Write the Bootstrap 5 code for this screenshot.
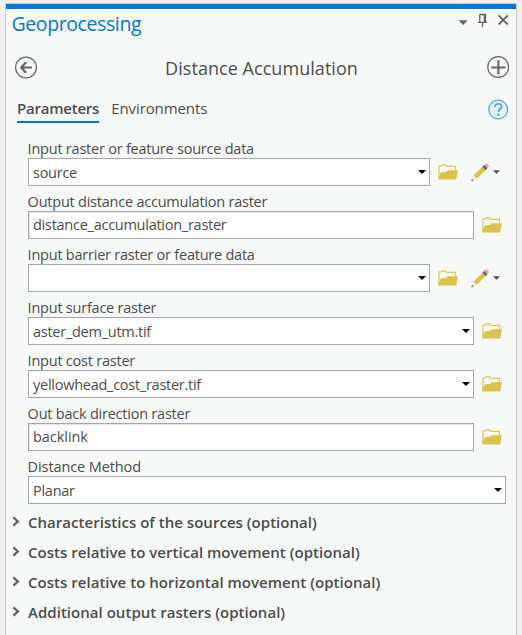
<!DOCTYPE html>
<html lang="en">
<head>
<meta charset="utf-8">
<meta name="viewport" content="width=device-width, initial-scale=1">
<title>Geoprocessing</title>
<link href="https://cdn.jsdelivr.net/npm/bootstrap@5.3.0/dist/css/bootstrap.min.css" rel="stylesheet">
<style>
  body { background: #f0f0f0; color: #4c4c4c; font: 14.5px "Open Sans", "Noto Sans", sans-serif; padding: 3px 5px 0; }
  svg { display: block; flex: none; }
  .pane { height: 632px; background: #f7f9f8; border: 1px solid #cacaca; border-bottom: 0; }
  .pane-accent { height: 5px; background: #0079d3; }
  .pane-title { height: 32px; padding: 0 6px 0 5.5px; }
  .pane-title h1 { font-size: 19.5px; line-height: 28px; letter-spacing: -.4px; color: #0079d3; padding-top: 1px; }
  .title-icons { padding-top: 4px; }
  .tool-head { height: 52px; padding: 0 6px 0 9px; }
  .tool-head h2 { font-size: 18px; line-height: 24px; letter-spacing: .05px; padding: 1px 2px 0 0; }
  .tabs { height: 47px; padding: 5px 7px 0 11px; }
  .tab-item { font-size: 15px; line-height: 20px; height: 25px; color: #4c4c4c; text-decoration: none; letter-spacing: -.1px; }
  .tab-item.active { font-weight: 600; letter-spacing: -.22px; border-bottom: 2px solid #0079c1; }
  .fields { padding: 0 10px 0 22px; }
  .field { height: 53px; }
  .field label { display: block; height: 18px; line-height: 17px; letter-spacing: -.23px; margin-left: -.4px; }
  .box { height: 28px; border: 1px solid #a6a6a6; background: #fff; padding: 0 3px 0 4px; line-height: 26px; letter-spacing: -.26px; }
  .box span { padding-top: 1px; line-height: 27px; }
  .box-text { box-shadow: inset 1px 1px 1px #e4e4e4; }
  .w-two { width: 402px; }
  .w-one { width: 446px; }
  .ls-wide { letter-spacing: -.1px !important; }
  .ls-none { letter-spacing: -.05px !important; }
  .folder-icon { margin-bottom: 1px; }
  .sections { padding: 0 6px; margin-top: -4px; }
  .section-row { height: 30px; font-size: 15px; font-weight: 600; letter-spacing: .03px; line-height: 30px; }
  .section-row svg { margin-right: 7px; margin-bottom: 2px; }
</style>
</head>
<body>
<svg width="0" height="0" class="position-absolute" aria-hidden="true">
  <symbol id="folder" viewBox="0 0 20 16">
    <path d="M1 14.5V2.2h1.8L4 .9h3.4l1.1 1.4h9v4.2" fill="#fcfaee" stroke="#dcc650" stroke-width="1.2"/>
    <path d="M.4 15.5V13L3 8.3l5-.2 1.5-1.9H20L18.2 15.5Z" fill="#d9c34a"/>
  </symbol>
  <symbol id="pencil" viewBox="0 0 19 19">
    <path d="M3.3 12.5 11.9 3.9 15.2 7.2 6.6 15.8Z" fill="#dcc348"/>
    <path d="M3.3 12.7 6.4 15.8 1.8 17.4Z" fill="#f4dfc4"/>
    <path d="M1 18.3 1.7 15.9 3.3 17.4Z" fill="#555"/>
    <path d="M11.9 3.9 14 1.8 17.3 5.1 15.2 7.2Z" fill="#666"/>
    <path d="M14 1.8 15 .9Q16 .1 17.2 1L18.2 2.1Q19 3.1 18.1 4.2L17.3 5.1Z" fill="#e9a49b"/>
  </symbol>
  <symbol id="down" viewBox="0 0 8 4"><path d="M0 0H8L4 4Z" fill="currentColor"/></symbol>
  <symbol id="chev" viewBox="0 0 9 11"><path d="M1.4 1.3 5.9 5.4 1.4 9.6" fill="none" stroke="#646464" stroke-width="2.3"/></symbol>
</svg>

<main class="pane">
  <div class="pane-accent"></div>
  <header class="pane-title d-flex justify-content-between align-items-start">
    <h1 class="fw-normal m-0">Geoprocessing</h1>
    <div class="title-icons d-flex">
      <svg width="52" height="16" viewBox="0 0 52 16" fill="none" stroke="#646464">
        <path d="M.5 7.2H9.7L5.1 12Z" fill="#646464" stroke="none"/>
        <path d="M22 1.5H27.5V9M21.8 1V9M20 9.3H29M24.5 9V14" stroke-width="1.3"/><path d="M26.6 1V9" stroke-width="1.8"/>
        <path d="M40.6 2.3 49.8 11.5M49.8 2.3 40.6 11.5" stroke-width="1.8"/>
      </svg>
    </div>
  </header>

  <div class="tool-head d-flex justify-content-between align-items-center">
    <svg width="23" height="23" viewBox="0 0 23 23" fill="none" stroke="#646464"><circle cx="11" cy="11.5" r="10.4" stroke-width="1.2"/><path d="M6 11.5H17M11 6.3 6.2 11.5 11 16.7" stroke-width="2.2"/></svg>
    <h2 class="fw-normal m-0">Distance Accumulation</h2>
    <svg width="23" height="23" viewBox="0 0 23 23" fill="none" stroke="#646464"><circle cx="11.2" cy="11" r="10.4" stroke-width="1.2"/><path d="M4.3 11.5H18.5M11.4 4.3V18.4" stroke-width="2.1"/></svg>
  </div>

  <nav class="tabs d-flex align-items-start">
    <a class="tab-item active" href="#">Parameters</a>
    <a class="tab-item ms-2 ps-1" href="#">Environments</a>
    <svg class="ms-auto" width="21" height="22" viewBox="0 0 21 22"><circle cx="10.2" cy="11.5" r="9.4" fill="#e5f2fb" stroke="#55a8df" stroke-width="1.3"/><path d="M7 9Q6.9 5.9 10.3 5.9T13.6 8.7C13.6 11 10.4 11.1 10.4 14" fill="none" stroke="#55a8df" stroke-width="1.9"/><path d="M9.2 15.7h2.3v2.3H9.2Z" fill="#55a8df"/></svg>
  </nav>

  <form class="fields">
    <div class="field">
      <label>Input raster or feature source data</label>
      <div class="d-flex align-items-center">
        <div class="box w-two d-flex align-items-center"><span>source</span><svg class="ms-auto text-black" width="8" height="4"><use href="#down"/></svg></div>
        <svg class="ms-2 folder-icon" width="20" height="16"><use href="#folder"/></svg>
        <svg class="ms-2 ps-1" width="23" height="19"><use href="#pencil" x=".3" width="19" height="19"/></svg>
        <svg class="ms-1" width="7" height="4"><use href="#down" width="7" height="4"/></svg>
      </div>
    </div>
    <div class="field">
      <label>Output distance accumulation raster</label>
      <div class="d-flex align-items-center">
        <div class="box box-text w-one">distance_accumulation_raster</div>
        <svg class="ms-2 folder-icon" width="20" height="16"><use href="#folder"/></svg>
      </div>
    </div>
    <div class="field">
      <label>Input barrier raster or feature data</label>
      <div class="d-flex align-items-center">
        <div class="box w-two d-flex align-items-center"><svg class="ms-auto text-black" width="8" height="4"><use href="#down"/></svg></div>
        <svg class="ms-2 folder-icon" width="20" height="16"><use href="#folder"/></svg>
        <svg class="ms-2 ps-1" width="23" height="19"><use href="#pencil" x=".3" width="19" height="19"/></svg>
        <svg class="ms-1" width="7" height="4"><use href="#down" width="7" height="4"/></svg>
      </div>
    </div>
    <div class="field">
      <label>Input surface raster</label>
      <div class="d-flex align-items-center">
        <div class="box w-one d-flex align-items-center"><span>aster_dem_utm.tif</span><svg class="ms-auto text-black" width="8" height="4"><use href="#down"/></svg></div>
        <svg class="ms-2 folder-icon" width="20" height="16"><use href="#folder"/></svg>
      </div>
    </div>
    <div class="field">
      <label>Input cost raster</label>
      <div class="d-flex align-items-center">
        <div class="box w-one d-flex align-items-center"><span>yellowhead_cost_raster.tif</span><svg class="ms-auto text-black" width="8" height="4"><use href="#down"/></svg></div>
        <svg class="ms-2 folder-icon" width="20" height="16"><use href="#folder"/></svg>
      </div>
    </div>
    <div class="field">
      <label>Out back direction raster</label>
      <div class="d-flex align-items-center">
        <div class="box box-text w-one ls-none">backlink</div>
        <svg class="ms-2 folder-icon" width="20" height="16"><use href="#folder"/></svg>
      </div>
    </div>
    <div class="field">
      <label class="ls-wide">Distance Method</label>
      <div class="box d-flex align-items-center"><span>Planar</span><svg class="ms-auto text-black" width="8" height="4"><use href="#down"/></svg></div>
    </div>
  </form>

  <div class="sections">
    <div class="section-row d-flex align-items-center"><svg width="9" height="11"><use href="#chev"/></svg>Characteristics of the sources (optional)</div>
    <div class="section-row d-flex align-items-center"><svg width="9" height="11"><use href="#chev"/></svg>Costs relative to vertical movement (optional)</div>
    <div class="section-row d-flex align-items-center"><svg width="9" height="11"><use href="#chev"/></svg>Costs relative to horizontal movement (optional)</div>
    <div class="section-row d-flex align-items-center"><svg width="9" height="11"><use href="#chev"/></svg>Additional output rasters (optional)</div>
  </div>
</main>
<script src="https://cdn.jsdelivr.net/npm/bootstrap@5.3.0/dist/js/bootstrap.bundle.min.js"></script>
</body>
</html>
